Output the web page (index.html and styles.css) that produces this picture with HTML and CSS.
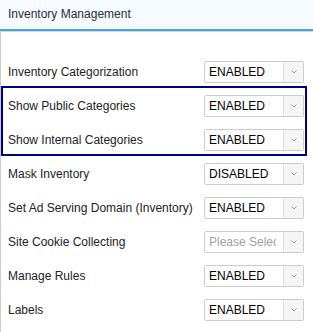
FILE: index.html
```html
<!DOCTYPE html>
<html lang="en">
<head>
    <meta charset="UTF-8"/>
    <title>Inventory Management</title>
    <link rel="stylesheet" href="styles.css">
</head>
<body>
<div class="panel">
    <div class="panel-header">Inventory Management</div>
    <div class="panel-body">
        <div class="row">
            <div class="label">Inventory Categorization</div>
            <div class="select"><span class="value">ENABLED</span><span class="caret"><svg width="6" height="4" viewBox="0 0 6 4"><path d="M0.5 0.5 L3 3 L5.5 0.5" fill="none" stroke="#9a9a9a" stroke-width="1"/></svg></span></div>
        </div>
        <div class="group">
            <div class="row">
                <div class="label">Show Public Categories</div>
                <div class="select"><span class="value">ENABLED</span><span class="caret"><svg width="6" height="4" viewBox="0 0 6 4"><path d="M0.5 0.5 L3 3 L5.5 0.5" fill="none" stroke="#9a9a9a" stroke-width="1"/></svg></span></div>
            </div>
            <div class="row">
                <div class="label">Show Internal Categories</div>
                <div class="select"><span class="value">ENABLED</span><span class="caret"><svg width="6" height="4" viewBox="0 0 6 4"><path d="M0.5 0.5 L3 3 L5.5 0.5" fill="none" stroke="#9a9a9a" stroke-width="1"/></svg></span></div>
            </div>
        </div>
        <div class="row">
            <div class="label">Mask Inventory</div>
            <div class="select"><span class="value">DISABLED</span><span class="caret"><svg width="6" height="4" viewBox="0 0 6 4"><path d="M0.5 0.5 L3 3 L5.5 0.5" fill="none" stroke="#9a9a9a" stroke-width="1"/></svg></span></div>
        </div>
        <div class="row">
            <div class="label">Set Ad Serving Domain (Inventory)</div>
            <div class="select"><span class="value">ENABLED</span><span class="caret"><svg width="6" height="4" viewBox="0 0 6 4"><path d="M0.5 0.5 L3 3 L5.5 0.5" fill="none" stroke="#9a9a9a" stroke-width="1"/></svg></span></div>
        </div>
        <div class="row">
            <div class="label">Site Cookie Collecting</div>
            <div class="select"><span class="value placeholder">Please Select</span><span class="caret"><svg width="6" height="4" viewBox="0 0 6 4"><path d="M0.5 0.5 L3 3 L5.5 0.5" fill="none" stroke="#9a9a9a" stroke-width="1"/></svg></span></div>
        </div>
        <div class="row">
            <div class="label">Manage Rules</div>
            <div class="select"><span class="value">ENABLED</span><span class="caret"><svg width="6" height="4" viewBox="0 0 6 4"><path d="M0.5 0.5 L3 3 L5.5 0.5" fill="none" stroke="#9a9a9a" stroke-width="1"/></svg></span></div>
        </div>
        <div class="row">
            <div class="label">Labels</div>
            <div class="select"><span class="value">ENABLED</span><span class="caret"><svg width="6" height="4" viewBox="0 0 6 4"><path d="M0.5 0.5 L3 3 L5.5 0.5" fill="none" stroke="#9a9a9a" stroke-width="1"/></svg></span></div>
        </div>
    </div>
</div>
</body>
</html>
```
FILE: styles.css
```css
body {
    margin: 0;
    padding: 0;
    font-family: "Liberation Sans", Arial, sans-serif;
    font-size: 12px;
    color: #222;
    background: #fff;
    overflow: hidden;
}

.panel-header {
    height: 29px;
    line-height: 29px;
    padding-left: 8px;
    background-color: #f5fbff;
    border-bottom: 2px solid #4ba3e0;
    box-shadow: 0 1px 0 #d3dbe2;
    color: #2b2b3b;
}

.panel-body {
    margin-top: 1px;
    border-left: 1px solid #ccc;
    padding-top: 29px;
    padding-bottom: 20px;
    display: flex;
    flex-direction: column;
    gap: 12px;
}

.row {
    display: flex;
    align-items: center;
    height: 22px;
    padding-left: 7px;
}

.group {
    width: 306px;
    box-sizing: border-box;
    border: 2px solid #00007f;
    margin: -9px 0 -5px;
    padding: 7px 0 3px;
    display: flex;
    flex-direction: column;
    gap: 12px;
}

.group > .row {
    padding-left: 5px;
}

.label {
    width: 196px;
    flex: none;
    white-space: nowrap;
    color: #222;
}

.select {
    width: 100px;
    height: 22px;
    box-sizing: border-box;
    border: 1px solid #ccc;
    border-radius: 2px;
    display: flex;
    flex: none;
    background: #fff;
}

.select > .value {
    flex: 1;
    min-width: 0;
    margin-left: 4px;
    margin-right: 7px;
    line-height: 20px;
    color: #000;
    overflow: hidden;
    white-space: nowrap;
}

.select > .placeholder {
    color: #a0a0a0;
}

.select > .caret {
    width: 19px;
    border-left: 1px solid #ddd;
    background-color: #f5f5f5;
    display: flex;
    align-items: center;
    justify-content: center;
}
```
